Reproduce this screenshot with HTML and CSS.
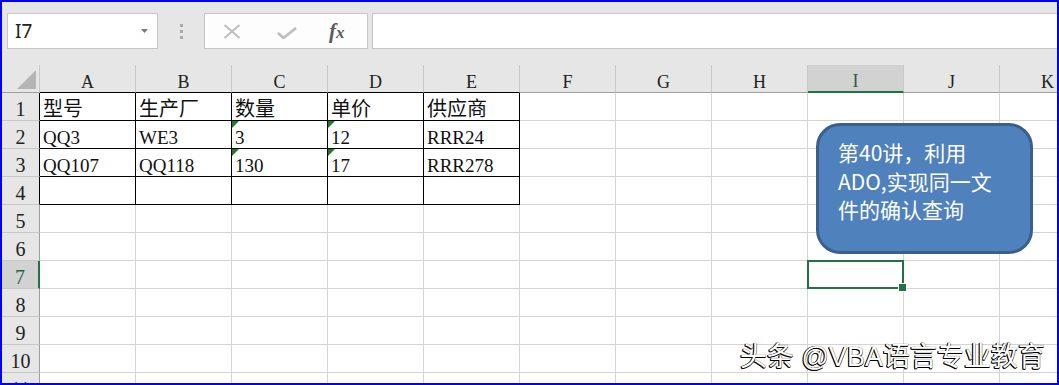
FILE: index.html
```html
<!DOCTYPE html>
<html lang="zh">
  <head>
    <meta charset="UTF-8" />
    <meta name="viewport" content="width=device-width, initial-scale=1.0" />
    <title>Sheet1</title>
    <link rel="stylesheet" href="styles.css">
  </head>
  <body>
    <div class="frame">
      <div class="toolbar">
        <div class="namebox">
          <span>I7</span>
          <svg width="7" height="4" viewBox="0 0 7 4"><path d="M0 0H7L3.5 4Z" fill="#777"/></svg>
        </div>
        <div class="grip"><i></i><i></i><i></i></div>
        <div class="fxbox">
          <svg class="ic-x" width="18" height="15" viewBox="0 0 18 15"><path d="M1.5 1L16.5 14M16.5 1L1.5 14" stroke="#bdbdbd" stroke-width="2" fill="none"/></svg>
          <svg class="ic-ok" width="20" height="12" viewBox="0 0 20 12"><path d="M1 6L6.5 11L19 1" stroke="#bdbdbd" stroke-width="2.6" fill="none"/></svg>
          <span class="fx">f<small>x</small></span>
        </div>
        <div class="formula"></div>
      </div>

      <div class="sheet">
        <div class="corner"><svg width="19" height="19" viewBox="0 0 19 19"><path d="M19 0V19H0Z" fill="#b5b5b5"/></svg></div>
        <div class="ch tb">A</div><div class="ch tb">B</div><div class="ch tb">C</div><div class="ch tb">D</div><div class="ch tb">E</div>
        <div class="ch">F</div><div class="ch">G</div><div class="ch">H</div><div class="ch on">I</div><div class="ch">J</div><div class="ch">K</div>

        <div class="rh tb">1</div>
        <div class="c t cjk">型号</div><div class="c t cjk">生产厂</div><div class="c t cjk">数量</div><div class="c t cjk">单价</div><div class="c t cjk">供应商</div>
        <div class="c"></div><div class="c"></div><div class="c"></div><div class="c"></div><div class="c"></div><div class="c"></div>

        <div class="rh tb">2</div>
        <div class="c t">QQ3</div><div class="c t">WE3</div><div class="c t n">3</div><div class="c t n">12</div><div class="c t">RRR24</div>
        <div class="c"></div><div class="c"></div><div class="c"></div><div class="c"></div><div class="c"></div><div class="c"></div>

        <div class="rh tb">3</div>
        <div class="c t">QQ107</div><div class="c t">QQ118</div><div class="c t n">130</div><div class="c t n">17</div><div class="c t">RRR278</div>
        <div class="c"></div><div class="c"></div><div class="c"></div><div class="c"></div><div class="c"></div><div class="c"></div>

        <div class="rh tb">4</div>
        <div class="c t"></div><div class="c t"></div><div class="c t"></div><div class="c t"></div><div class="c t"></div>
        <div class="c"></div><div class="c"></div><div class="c"></div><div class="c"></div><div class="c"></div><div class="c"></div>

        <div class="rh">5</div>
        <div class="c"></div><div class="c"></div><div class="c"></div><div class="c"></div><div class="c"></div><div class="c"></div><div class="c"></div><div class="c"></div><div class="c"></div><div class="c"></div><div class="c"></div>

        <div class="rh">6</div>
        <div class="c"></div><div class="c"></div><div class="c"></div><div class="c"></div><div class="c"></div><div class="c"></div><div class="c"></div><div class="c"></div><div class="c"></div><div class="c"></div><div class="c"></div>

        <div class="rh on">7</div>
        <div class="c"></div><div class="c"></div><div class="c"></div><div class="c"></div><div class="c"></div><div class="c"></div><div class="c"></div><div class="c"></div><div class="c sel"></div><div class="c"></div><div class="c"></div>

        <div class="rh">8</div>
        <div class="c"></div><div class="c"></div><div class="c"></div><div class="c"></div><div class="c"></div><div class="c"></div><div class="c"></div><div class="c"></div><div class="c"></div><div class="c"></div><div class="c"></div>

        <div class="rh">9</div>
        <div class="c"></div><div class="c"></div><div class="c"></div><div class="c"></div><div class="c"></div><div class="c"></div><div class="c"></div><div class="c"></div><div class="c"></div><div class="c"></div><div class="c"></div>

        <div class="rh">10</div>
        <div class="c"></div><div class="c"></div><div class="c"></div><div class="c"></div><div class="c"></div><div class="c"></div><div class="c"></div><div class="c"></div><div class="c"></div><div class="c"></div><div class="c"></div>

        <div class="rh">11</div>
        <div class="c"></div><div class="c"></div><div class="c"></div><div class="c"></div><div class="c"></div><div class="c"></div><div class="c"></div><div class="c"></div><div class="c"></div><div class="c"></div><div class="c"></div>
      </div>

      <div class="callout">第40讲，利用<br>ADO,实现同一文<br>件的确认查询</div>
      <div class="mark">头条 @VBA语言专业教育</div>
    </div>
  </body>
</html>
```

FILE: styles.css
```css
* {
  margin: 0;
  padding: 0;
  box-sizing: border-box;
}

body {
  background: #fff;
  font-family: "Liberation Serif", "Noto Sans CJK SC", serif;
  color: #111;
}

.frame {
  position: relative;
  width: 1059px;
  height: 385px;
  border: 2px solid #0000ff;
  overflow: hidden;
  background: #fff;
}

/* formula toolbar */
.toolbar {
  display: flex;
  align-items: flex-start;
  height: 63px;
  padding: 11px 0 0 5px;
  background: #e6e6e6;
}

.namebox {
  width: 151px;
  height: 36px;
  display: flex;
  align-items: center;
  justify-content: space-between;
  padding: 0 9px 0 7px;
  background: #fff;
  border: 1px solid #c6c6c6;
  font-family: "Noto Sans", sans-serif;
  font-size: 19px;
  color: #222;
}

.grip {
  width: 46px;
  height: 36px;
  display: flex;
  flex-direction: column;
  align-items: center;
  justify-content: center;
  gap: 3px;
}

.grip i {
  width: 3px;
  height: 3px;
  background: #a9a9a9;
}

.fxbox {
  width: 164px;
  height: 36px;
  display: flex;
  align-items: center;
  padding-left: 18px;
  background: #fdfdfd;
  border: 1px solid #c6c6c6;
}

.fxbox .ic-ok {
  margin-left: 36px;
  margin-top: 3px;
}

.fx {
  margin-left: 32px;
  font-family: "Liberation Serif", serif;
  font-style: italic;
  font-weight: bold;
  font-size: 21px;
  color: #5a5a5a;
  line-height: 1;
}

.fx small {
  font-size: 17px;
}

.formula {
  flex: 1;
  height: 36px;
  margin-left: 4px;
  background: #fff;
  border: 1px solid #c6c6c6;
  border-right: none;
}

/* grid */
.sheet {
  display: grid;
  grid-template-columns: 38px repeat(11, 96px);
  grid-auto-rows: 28px;
}

.corner {
  display: flex;
  align-items: flex-end;
  justify-content: flex-end;
  padding: 0 3px 3px 0;
  background: #e6e6e6;
  border-right: 1px solid #c8c8c8;
  border-bottom: 1px solid #9e9e9e;
}

.ch {
  display: flex;
  align-items: flex-end;
  justify-content: center;
  background: #e6e6e6;
  border-right: 1px solid #c8c8c8;
  border-bottom: 1px solid #9e9e9e;
  font-size: 18px;
  line-height: 20px;
  color: #222;
}

.ch.tb {
  border-bottom-color: #000;
}

.ch.on {
  background: #d2d2d2;
  border-bottom: 2px solid #217346;
  color: #1f6244;
}

.rh {
  display: flex;
  align-items: flex-end;
  justify-content: center;
  padding-bottom: 1px;
  background: #e6e6e6;
  border-right: 1px solid #9e9e9e;
  border-bottom: 1px solid #c8c8c8;
  font-size: 20px;
  line-height: 20px;
  color: #222;
}

.rh.tb {
  border-right-color: #000;
}

.rh.on {
  background: #d2d2d2;
  border-right: 2px solid #217346;
  color: #1f6244;
}

.c {
  position: relative;
  display: flex;
  align-items: flex-end;
  padding: 0 3px;
  border-right: 1px solid #d4d4d4;
  border-bottom: 1px solid #d4d4d4;
  font-size: 19px;
  line-height: 20px;
  white-space: nowrap;
}

.c.t {
  border-right-color: #000;
  border-bottom-color: #000;
}

.c.cjk {
  font-size: 20px;
  padding-bottom: 1px;
}

.c.n::before {
  content: "";
  position: absolute;
  top: 0;
  left: 0;
  border-top: 7px solid #1d7b22;
  border-right: 7px solid transparent;
}

.c.sel {
  z-index: 1;
}

.c.sel::after {
  content: "";
  position: absolute;
  left: -1px;
  top: -1px;
  right: -1px;
  bottom: -1px;
  border: 2px solid #217346;
}

.c.sel::before {
  content: "";
  position: absolute;
  right: -4px;
  bottom: -4px;
  width: 7px;
  height: 7px;
  background: #217346;
  border: 1px solid #fff;
  z-index: 2;
}

/* shape and watermark over the sheet */
.callout {
  position: absolute;
  left: 814px;
  top: 121px;
  width: 217px;
  height: 131px;
  padding: 12px 0 0 19px;
  background: #4f81bd;
  border: 3px solid #3b5f8c;
  border-radius: 24px;
  font-family: "Noto Sans CJK SC", sans-serif;
  font-size: 21px;
  line-height: 28.5px;
  color: #fff;
}

.mark {
  position: absolute;
  left: 738px;
  top: 342px;
  font-family: "Liberation Sans", "Noto Sans CJK SC", sans-serif;
  font-size: 27px;
  line-height: 27px;
  color: #fff;
  white-space: nowrap;
  text-shadow: -1px 1px 0 #000, -1px 0 0 #000, 0 1px 0 #000, 0 0 1px #000;
}
```
